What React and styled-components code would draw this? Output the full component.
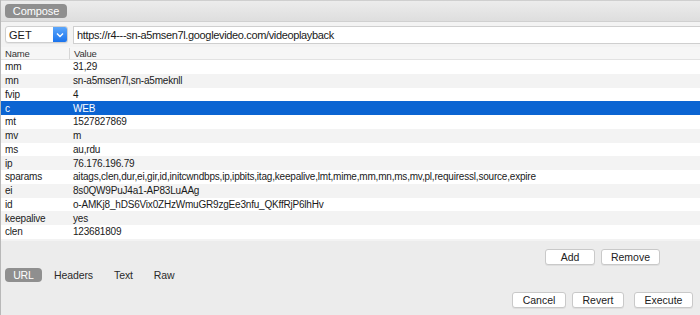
import React from 'react';
import styled, { createGlobalStyle } from 'styled-components';

const GlobalStyle = createGlobalStyle`
  html, body {
    margin: 0;
    padding: 0;
    background: #ececec;
  }
  body {
    font-family: "Liberation Sans", Arial, sans-serif;
    color: #1a1a1a;
  }
`;

const Window = styled.div`
  width: 700px;
  height: 315px;
  display: flex;
  flex-direction: column;
  background: #ececec;
  border-left: 1px solid #b8b8b8;
  box-sizing: border-box;
  overflow: hidden;
`;

const TopBar = styled.div`
  height: 22px;
  display: flex;
  align-items: center;
  padding-left: 4px;
  box-sizing: border-box;
  border-top: 1px solid #cfcfcf;
  border-bottom: 1px solid #d0d0d0;
  background: linear-gradient(#ececec, #dedede);
`;

const Segment = styled.div`
  height: 14px;
  width: ${(p) => (p.$w ? `${p.$w}px` : 'auto')};
  padding: 0 ${(p) => (p.$w ? 0 : 9)}px;
  border-radius: 4px;
  background: ${(p) => (p.$active ? '#8f8f8f' : 'transparent')};
  color: ${(p) => (p.$active ? '#ffffff' : '#2a2a2a')};
  font-size: ${(p) => p.$size || 10.5}px;
  letter-spacing: -0.1px;
  display: flex;
  align-items: center;
  justify-content: center;
  box-sizing: border-box;
`;

const RequestRow = styled.div`
  display: flex;
  align-items: center;
  gap: 5px;
  height: 25px;
  padding: 0 0 0 4px;
  background: #f3f3f3;
`;

const Select = styled.div`
  width: 63px;
  height: 17px;
  display: flex;
  background: #ffffff;
  border: 1px solid #cfcfcf;
  border-radius: 3px;
  box-sizing: border-box;
  box-shadow: 0 1px 0 rgba(0, 0, 0, 0.05);
  overflow: hidden;
`;

const SelectLabel = styled.div`
  flex: 1;
  font-size: 11px;
  padding-left: 3px;
  display: flex;
  align-items: center;
`;

const SelectArrow = styled.div`
  width: 14px;
  background: linear-gradient(#5ca7fb, #1a73ed);
  display: flex;
  align-items: center;
  justify-content: center;
`;

const UrlField = styled.div`
  flex: 1;
  height: 18px;
  background: #ffffff;
  border: 1px solid #cfcfcf;
  border-right: none;
  box-sizing: border-box;
  font-size: 11px;
  letter-spacing: -0.35px;
  padding-left: 3px;
  display: flex;
  align-items: center;
`;

const Table = styled.div`
  height: 194px;
  background: #f3f3f3;
  display: flex;
  flex-direction: column;
`;

const Row = styled.div`
  display: grid;
  grid-template-columns: 68px 1fr;
  height: ${(p) => (p.$head ? 12 : 13.75)}px;
  align-items: center;
  font-size: ${(p) => (p.$head ? 9.5 : 10)}px;
  letter-spacing: -0.2px;
  background: ${(p) => (p.$selected ? '#0b64d2' : p.$odd ? '#f3f3f3' : '#ffffff')};
  color: ${(p) => (p.$selected ? '#ffffff' : p.$head ? '#333333' : '#1a1a1a')};
  ${(p) => p.$head && 'border-bottom: 1px solid #e2e2e2; background: #f6f6f6;'}
  white-space: nowrap;
`;

const Cell = styled.div`
  padding-left: 4px;
  ${(p) => p.$divider && 'border-left: 1px solid #d6d6d6;'}
  overflow: hidden;
`;

const ActionRow = styled.div`
  display: flex;
  justify-content: flex-end;
  gap: ${(p) => p.$gap || 6}px;
  padding-right: ${(p) => p.$right || 40}px;
  margin-top: ${(p) => p.$top || 0}px;
`;

const Button = styled.div`
  width: ${(p) => p.$w}px;
  height: 16px;
  background: #ffffff;
  border: 1px solid #c9c9c9;
  border-radius: 3px;
  box-sizing: border-box;
  box-shadow: 0 1px 0 rgba(0, 0, 0, 0.06);
  font-size: 10.5px;
  display: flex;
  align-items: center;
  justify-content: center;
  color: #222;
`;

const TabBar = styled.div`
  display: flex;
  align-items: center;
  padding-left: 4px;
  margin-top: 3px;
  gap: 3px;
`;

const rows = [
  ['mm', '31,29'],
  ['mn', 'sn-a5msen7l,sn-a5meknll'],
  ['fvip', '4'],
  ['c', 'WEB'],
  ['mt', '1527827869'],
  ['mv', 'm'],
  ['ms', 'au,rdu'],
  ['ip', '76.176.196.79'],
  ['sparams', 'aitags,clen,dur,ei,gir,id,initcwndbps,ip,ipbits,itag,keepalive,lmt,mime,mm,mn,ms,mv,pl,requiressl,source,expire'],
  ['ei', '8s0QW9PuJ4a1-AP83LuAAg'],
  ['id', 'o-AMKj8_hDS6Vix0ZHzWmuGR9zgEe3nfu_QKffRjP6lhHv'],
  ['keepalive', 'yes'],
  ['clen', '123681809'],
];

export default function App() {
  return (
    <Window>
      <GlobalStyle />
      <TopBar>
        <Segment $active $w={62} $size={11}>
          Compose
        </Segment>
      </TopBar>
      <RequestRow>
        <Select>
          <SelectLabel>GET</SelectLabel>
          <SelectArrow>
            <svg width="8" height="6" viewBox="0 0 8 6">
              <path d="M1 1.5 L4 4.5 L7 1.5" fill="none" stroke="#fff" strokeWidth="1.4" />
            </svg>
          </SelectArrow>
        </Select>
        <UrlField>https://r4---sn-a5msen7l.googlevideo.com/videoplayback</UrlField>
      </RequestRow>
      <Table>
        <Row $head>
          <Cell>Name</Cell>
          <Cell $divider>Value</Cell>
        </Row>
        {rows.map(([name, value], i) => (
          <Row key={name} $odd={i % 2 === 1} $selected={name === 'c'}>
            <Cell>{name}</Cell>
            <Cell>{value}</Cell>
          </Row>
        ))}
      </Table>
      <ActionRow $gap={6} $right={40} $top={8}>
        <Button $w={50}>Add</Button>
        <Button $w={59}>Remove</Button>
      </ActionRow>
      <TabBar>
        <Segment $active $w={37}>URL</Segment>
        <Segment>Headers</Segment>
        <Segment>Text</Segment>
        <Segment>Raw</Segment>
      </TabBar>
      <ActionRow $gap={6} $right={7} $top={10}>
        <Button $w={54}>Cancel</Button>
        <Button $w={52} style={{ marginRight: 4 }}>Revert</Button>
        <Button $w={59}>Execute</Button>
      </ActionRow>
    </Window>
  );
}
